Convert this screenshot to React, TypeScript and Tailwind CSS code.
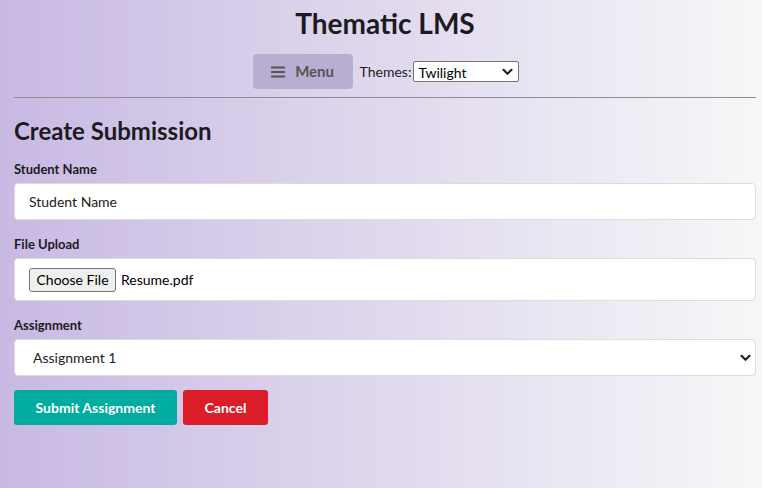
import React, { useState } from 'react';

const MenuIcon = () => (
  <svg width="14" height="12" viewBox="0 0 14 12" fill="#555">
    <rect x="0" y="0.5" width="14" height="2" rx="0.5" />
    <rect x="0" y="5" width="14" height="2" rx="0.5" />
    <rect x="0" y="9.5" width="14" height="2" rx="0.5" />
  </svg>
);

const Chevron = () => (
  <svg width="11" height="8" viewBox="0 0 11 8" fill="none" stroke="#222" strokeWidth="2.2" strokeLinecap="round" strokeLinejoin="round">
    <path d="M1.5 1.8 5.5 5.8 9.5 1.8" />
  </svg>
);

const App: React.FC = () => {
  const [theme, setTheme] = useState('Twilight');
  const [name, setName] = useState('');
  const [assignment, setAssignment] = useState('Assignment 1');

  return (
    <div className="min-h-[488px] w-full bg-[linear-gradient(to_right,#c8b9e3,#f7f7f8)] font-['Lato','Noto_Sans',sans-serif] text-[#1c1b1f]">
      {/* Header */}
      <header className="flex flex-col items-center pt-[6px]">
        <h1 className="pl-[8px] text-[28px] font-bold leading-[34px] text-[#1c1b1f]">Thematic LMS</h1>
        <div className="mt-[14px] flex items-center pl-[10px]">
          <button className="flex h-[35px] w-[100px] items-center justify-center gap-[10px] rounded-[4px] bg-[#b8aed1] text-[15px] font-bold text-[#555]">
            <MenuIcon />
            Menu
          </button>
          <label className="ml-[7px] flex items-center text-[14px] text-[#1c1b1f]">
            Themes:
            <span className="relative ml-[2px] flex h-[21px] w-[106px] items-center rounded-[2px] border border-[#767676] bg-white">
              <select
                value={theme}
                onChange={(e) => setTheme(e.target.value)}
                className="h-full w-full appearance-none bg-transparent pl-[4px] text-[14px] text-black outline-none"
              >
                <option>Twilight</option>
                <option>Sunrise</option>
                <option>Ocean</option>
              </select>
              <span className="pointer-events-none absolute right-[5px] top-[6px]">
                <Chevron />
              </span>
            </span>
          </label>
        </div>
      </header>

      <div className="pl-[14px] pr-[6px]">
        <hr className="mt-[8px] border-t border-[#8f8d92]" />

        <h2 className="mt-[18px] text-[24px] font-bold leading-[30px] text-[#1c1b1f]">Create Submission</h2>

        <form className="mt-[15px]" onSubmit={(e) => e.preventDefault()}>
          <label className="block text-[13px] font-bold leading-[16px]">Student Name</label>
          <input
            value={name}
            onChange={(e) => setName(e.target.value)}
            placeholder="Student Name"
            className="mt-[6px] h-[37px] w-full rounded-[4px] border border-[#dcdcdc] bg-white px-[14px] text-[14px] text-[#222] outline-none placeholder:text-[#222]"
          />

          <label className="mt-[16px] block text-[13px] font-bold leading-[16px]">File Upload</label>
          <div className="mt-[6px] flex h-[43px] w-full items-center rounded-[4px] border border-[#dcdcdc] bg-white px-[14px]">
            <span className="flex h-[24px] items-center rounded-[3px] border border-[#767676] bg-[#efefef] px-[6.5px] text-[14px] text-black">
              Choose File
            </span>
            <span className="ml-[5px] text-[14px] text-black">Resume.pdf</span>
          </div>

          <label className="mt-[16px] block text-[13px] font-bold leading-[16px]">Assignment</label>
          <div className="relative mt-[6px] h-[37px] w-full rounded-[4px] border border-[#dcdcdc] bg-white">
            <select
              value={assignment}
              onChange={(e) => setAssignment(e.target.value)}
              className="h-full w-full appearance-none bg-transparent pl-[18px] text-[14px] text-[#222] outline-none"
            >
              <option>Assignment 1</option>
              <option>Assignment 2</option>
              <option>Assignment 3</option>
            </select>
            <span className="pointer-events-none absolute right-[4px] top-[14px]">
              <Chevron />
            </span>
          </div>

          <div className="mt-[14px] flex gap-[6px]">
            <button type="submit" className="h-[35px] w-[163px] rounded-[3px] bg-[#00ab9f] text-[14px] font-bold text-white">
              Submit Assignment
            </button>
            <button type="button" className="h-[35px] w-[85px] rounded-[3px] bg-[#dc1c28] text-[14px] font-bold text-white">
              Cancel
            </button>
          </div>
        </form>
      </div>
    </div>
  );
};

export default App;
